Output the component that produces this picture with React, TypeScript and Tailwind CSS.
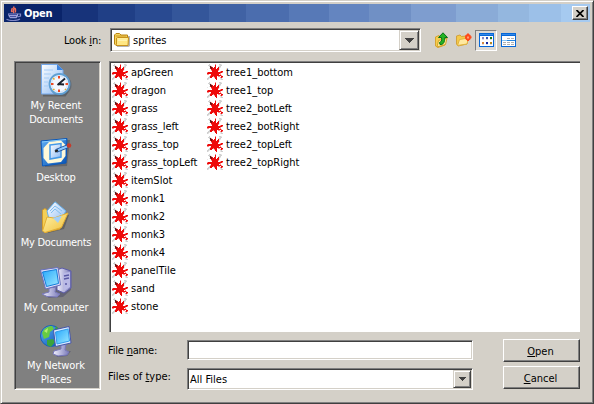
import type { ReactNode } from "react";

const SPLAT = [
  "..g.....p...ggl.",
  ".ggl....r...lgg.",
  "..gkp...r..lgg..",
  "...kkr.rr..rgl..",
  "..lrkrrrr.rrl...",
  "l...rrrrrrrrl...",
  "....prrrrrrp....",
  ".....rrrrrr..prr",
  "prrrrrrrrrrrrrrp",
  "rrrrrrrrrrrrrp..",
  "pp..rrrrrrrr.p..",
  "...prrrrrrrrrrp.",
  "..grrrprrr.pp.rr",
  ".ggrr..prr...prp",
  "ggl.....rr...lg.",
  "gl.......r...lgg",
];

const FILL: Record<string, string> = { r: "#ee0a0a", p: "#f88c8c", k: "#5a1c1c", g: "#d0d0d0", l: "#e8e8e8" };

function Splat() {
  return (
    <svg width="16" height="16" viewBox="0 0 16 16" shapeRendering="crispEdges" className="shrink-0">
      {SPLAT.map((row, y) =>
        row.split("").map((c, x) => (c === "." ? null : <rect key={`${x}-${y}`} x={x} y={y} width="1" height="1" fill={FILL[c]} />)),
      )}
    </svg>
  );
}

function JavaCup() {
  return (
    <svg width="16" height="16" viewBox="0 0 16 16" fill="none">
      <path d="M8 8C5.5 6 9.5 4.5 7.5 1.5M6 7C4.5 5 6.8 4.5 6 3M9.5 7.5C9 6 10.2 5.2 9 3" stroke="#f0705c" strokeWidth="1.5" />
      <path d="M2 8.5H12V11L10.5 13.2H4L2.5 11Z" fill="#9aa0d8" />
      <path d="M3 9.5H11M4 11.5H10" stroke="#4750a0" />
      <path d="M12 9H14.5V11L11.5 12M.5 14.2C4 16 11 16 14 14" stroke="#8088c8" strokeWidth="1.2" />
    </svg>
  );
}

function FolderIcon() {
  return (
    <svg width="16" height="16" viewBox="0 0 16 16">
      <path d="M2 4H16V14L14.5 15H3Z" fill="#777" opacity=".55" />
      <path d="M.5 3L2 1.5H5.5L7 3H13.5V12.5L12.5 13.5H2L.5 12Z" fill="#f8d860" stroke="#b98411" />
      <path d="M1.5 4H12.5M2.5 12.5V6L3.5 5.5H14.5L14 13.5H3Z" fill="#ffe784" stroke="#c8921c" />
      <path d="M4 7H13.5M4 8.5H13" stroke="#fff4b0" />
    </svg>
  );
}

function UpIcon() {
  return (
    <svg width="16" height="16" viewBox="0 0 16 16">
      <path d="M1.5 5L5 3.5L6 5L11 4V13L4 15.5L1.5 14Z" fill="#f5ce4d" stroke="#d6a331" />
      <path d="M3 15L4.5 8.5L13 6L11.5 12.5Z" fill="#ffe894" stroke="#d4a42c" />
      <path d="M6 12.5C9.5 13 10.8 10 10.8 5.5H13.5L9 .8L4.5 5.5H7.5C8 9 7.5 9.5 5.5 10.5Z" fill="#22b422" stroke="#087018" />
    </svg>
  );
}

function NewFolderIcon() {
  return (
    <svg width="16" height="16" viewBox="0 0 16 16">
      <path d="M.5 4L4 3L5.5 4.5L11 4V12L2 14L.5 12Z" fill="#f5ca49" stroke="#d2a13b" />
      <path d="M1.5 13.5L3.5 7.5L12.5 6L11 12Z" fill="#ffe9a0" stroke="#dfb23e" />
      <path d="M12 1.5V9M9 5.2H15.5M9.8 3L14.2 7.5M14.2 3L9.8 7.5" stroke="#ff4818" strokeWidth="2" />
      <rect x="11" y="4.5" width="2" height="2" fill="#ff9d72" />
    </svg>
  );
}

function ViewFrame({ children }: { children: ReactNode }) {
  return (
    <svg width="15" height="14" viewBox="0 0 15 14" shapeRendering="crispEdges">
      <rect width="15" height="14" fill="#0768d8" />
      <rect x="1" y="3" width="13" height="10" fill="#fff" />
      <rect x="1" y="1" width="13" height="1" fill="#3589e8" />
      {children}
    </svg>
  );
}

function ListViewIcon() {
  const dots = ["#8a8ac0", "#3458b8", "#187818", "#d68840", "#1428a0", "#b88820"];
  return (
    <ViewFrame>
      {dots.map((c, i) => (
        <rect key={i} x={3 + (i % 3) * 4} y={i < 3 ? 4 : 9} width="2" height="2" fill={c} />
      ))}
      {dots.map((_, i) => (
        <rect key={i} x={3 + (i % 3) * 4} y={i < 3 ? 6 : 11} width="2" height="1" fill="#dcdce4" />
      ))}
    </ViewFrame>
  );
}

function DetailViewIcon() {
  return (
    <ViewFrame>
      <path d="M6 5.5H13M2 9.5H13M2 11.5H13" stroke="#b0b0b0" strokeDasharray="3 1" />
      <path d="M1 7.5H14" stroke="#8cc8f6" />
      <path d="M6 7.5H14" stroke="#2686de" />
    </ViewFrame>
  );
}

function Big({ children }: { children: ReactNode }) {
  return (
    <svg width="34" height="34" viewBox="0 0 34 34" className="-mb-0.5 shrink-0">
      <defs>
        <linearGradient id="paper" x2="1" y2="1"><stop stopColor="#fff" /><stop offset="1" stopColor="#88b8f4" /></linearGradient>
        <linearGradient id="blue" x2="1" y2="1"><stop stopColor="#5faef4" /><stop offset="1" stopColor="#0752b4" /></linearGradient>
        <linearGradient id="screen" x2="1" y2="1"><stop stopColor="#27a8fc" /><stop offset="1" stopColor="#9be8ff" /></linearGradient>
        <linearGradient id="gold" x2="1" y2="1"><stop stopColor="#fff3ab" /><stop offset="1" stopColor="#f0bf39" /></linearGradient>
        <linearGradient id="metal" x2="1"><stop stopColor="#f2f2ff" /><stop offset="1" stopColor="#7878b8" /></linearGradient>
      </defs>
      {children}
    </svg>
  );
}

function RecentIcon() {
  return (
    <Big>
      <path d="M4 31.5H26L29 27" stroke="#505050" strokeWidth="2" fill="none" opacity=".6" />
      <path d="M2.5.5H18L24 6V30H2.5Z" fill="url(#paper)" stroke="#72a7eb" />
      <path d="M18 .5V6H24" fill="#3b83df" />
      <path d="M5 6H14M5 10H12M5 14H10M5 18H9M5 22H9" stroke="#a5ccf7" />
      <circle cx="21.5" cy="21" r="11" fill="#4e5d70" opacity=".6" />
      <circle cx="20.5" cy="20" r="10" fill="#f3f7ff" stroke="#5fa0d4" strokeWidth="1.8" />
      <circle cx="20.5" cy="20" r="8" fill="none" stroke="#d4e4f7" strokeWidth="1.3" />
      <path d="M20 12V14.5M20 25.5V28M12 20H14.5M26.5 20H29" stroke="#f04820" strokeWidth="2" />
      <path d="M14 14L15.5 15.5M27 26L26 25M14 26L15.5 25" stroke="#e4ad2d" strokeWidth="1.5" />
      <path d="M18.5 21L26 14.5M19 20L25 20.5" stroke="#18202c" strokeWidth="1.8" />
    </Big>
  );
}

function DesktopIcon() {
  return (
    <Big>
      <path d="M4 5L31 4L28 30L6 31Z" fill="#454b55" opacity=".5" />
      <path d="M2 5L28 2.5L27 27L3.5 30Z" fill="url(#blue)" stroke="#0a58ba" />
      <path d="M3 6L27 3.5" stroke="#8bcdfb" />
      <path d="M10 6L22 4.5L26.5 9V20L22 26L9 27.5L4.5 22V12Z" fill="#fff9d9" />
      <path d="M11 9L22 7.5V21L11 23Z" fill="url(#paper)" stroke="#4599e8" strokeWidth="1.5" />
      <path d="M17 15L28 10.5" stroke="#194c9a" strokeWidth="4" />
      <path d="M17 15L28 10.5" stroke="#8ccaff" strokeWidth="2.4" />
      <path d="M16 15.5L19 14.3" stroke="#202020" strokeWidth="2.2" />
      <circle cx="30" cy="9.5" r="2.3" fill="#c43b2c" />
    </Big>
  );
}

function DocumentsIcon() {
  return (
    <Big>
      <path d="M5 14L9 32L25 28L30 14Z" fill="#494949" opacity=".55" />
      <path d="M3.5 9L6 7.5L9 10H22L21 28L6 31.5L3.5 28Z" fill="#f4cf55" stroke="#d19c2c" />
      <path d="M8 10L16 .8L27 10L19 23L11 22Z" fill="url(#paper)" stroke="#65aee8" />
      <path d="M11 10L16 5L23 10M12 12L16 8L22 13" stroke="#82bfef" fill="none" />
      <path d="M3.5 30L8 16L15 17L29 12L22.5 26.5L6 31.5Z" fill="url(#gold)" stroke="#e4ae32" />
      <path d="M14 17L23 14.5L19 22Z" fill="#a1cffb" />
    </Big>
  );
}

function ComputerIcon() {
  return (
    <Big>
      <path d="M19 8L32 7V24L24 31L9 32Z" fill="#464668" opacity=".5" />
      <path d="M18 4L23 2L32 5V22L25 27L18 24Z" fill="url(#metal)" stroke="#5c5ca8" />
      <path d="M24 7L31 6V21L25 25Z" fill="#b9b9e6" />
      <path d="M25 10L30 9M25 13L30 12M26 18H28" stroke="#5959a4" strokeWidth="1.4" />
      <path d="M10 22L17 21L16 26L21 28L18 31L8 30.5L3 28L10 26Z" fill="url(#metal)" stroke="#7777b9" />
      <path d="M1.5 4L19 1.5L21.5 19L6.5 23Z" fill="#dedefa" stroke="#6870bd" />
      <path d="M3.5 6L17.5 3.5L19.5 17.5L7.5 20.5Z" fill="url(#screen)" stroke="#147dda" />
    </Big>
  );
}

function NetworkIcon() {
  return (
    <Big>
      <circle cx="12" cy="12" r="10.5" fill="url(#blue)" stroke="#1760b8" />
      <path d="M3 9C5 4 9 2 13 2L15 5L11 8L10 13L5 15Z" fill="#67cb43" />
      <path d="M17 2L21 7L18 10L15 8ZM8 16L14 15L16 18L12 23L8 21Z" fill="#3ba43c" />
      <path d="M5 7L9 4L8 9Z" fill="#b8ee73" />
      <path d="M17 30L32 27L28 32L18 33Z" fill="#484868" opacity=".6" />
      <path d="M22 20H27L26 26L30 28L28 31L19 32L14 30L15 27L22 25Z" fill="url(#metal)" stroke="#7777b9" />
      <path d="M14.5 6L30 2.5L32 19L16.5 22.5Z" fill="#d8e8ff" stroke="#4656a8" />
      <path d="M16.5 8L29 5L30.5 17L18 20Z" fill="url(#screen)" stroke="#329dea" />
    </Big>
  );
}

function Place({ icon, lines, className }: { icon: ReactNode; lines: { text: string; cls: string }[]; className?: string }) {
  return (
    <div className={`flex flex-col items-center text-white ${className ?? ""}`}>
      {icon}
      <div className="mt-[3px] text-center leading-[14px]">
        {lines.map((l) => (
          <div key={l.text} className={`whitespace-nowrap ${l.cls}`}>{l.text}</div>
        ))}
      </div>
    </div>
  );
}

function Files({ names, className }: { names: string[]; className: string }) {
  return (
    <div className={className}>
      {names.map((n) => (
        <div key={n} className="flex h-[18px] items-center gap-[3px] whitespace-nowrap leading-[14px]">
          <Splat />
          <span className="pt-[2px]">{n}</span>
        </div>
      ))}
    </div>
  );
}

function ArrowButton({ big }: { big?: boolean }) {
  return (
    <div className={`flex h-full shrink-0 items-center justify-center border border-t-[#d4d0c8] border-l-[#d4d0c8] border-r-[#404040] border-b-[#404040] bg-[#d4d0c8] shadow-[inset_1px_1px_0_#fff,inset_-1px_-1px_0_#808080] ${big ? "w-5" : "w-[18px]"}`}>
      <svg width={big ? 9 : 7} height={big ? 5 : 4} viewBox="0 0 9 5" shapeRendering="crispEdges">
        <path d="M0 0H9L4.5 5Z" fill="#404040" />
      </svg>
    </div>
  );
}

const SUNKEN = "border border-t-[#808080] border-l-[#808080] border-r-white border-b-white bg-white shadow-[inset_1px_1px_0_#404040,inset_-1px_-1px_0_#d4d0c8]";
const BUTTON = "flex h-[23px] w-[77px] items-center justify-center border border-t-white border-l-white border-r-[#404040] border-b-[#404040] bg-[#d4d0c8] pt-[2px] pr-[2px] leading-[14px] shadow-[inset_-1px_-1px_0_#808080]";

export default function App() {
  return (
    <div className="flex h-[404px] w-[594px] flex-col overflow-hidden border border-t-[#d4d0c8] border-l-[#d4d0c8] border-r-[#404040] border-b-[#404040] bg-[#d4d0c8] px-[3px] pt-[3px] font-['DejaVu_Sans_Condensed','DejaVu_Sans',sans-serif] text-[11px] text-black shadow-[inset_1px_1px_0_#fff,inset_-1px_-1px_0_#808080] [font-stretch:condensed]">
      <div className="flex h-[18px] shrink-0 items-center bg-[linear-gradient(90deg,#0a246a_0_58px,#17337a_58px_94px,#203f86_94px_131px,#294a91_131px_168px,#34569a_168px_205px,#4062a4_205px_242px,#4b6dae_242px_285px,#5779b7_285px_325px,#6485c0_325px_365px,#7090c5_365px_407px,#7e9dcf_407px_452px,#8aabd7_452px_494px,#94b7df_494px_525px,#9cc0e8_525px_557px,#a6caf0_557px)] pr-[2px] pl-[2px]">
        <JavaCup />
        <span className="ml-[2px] pt-[2px] leading-[14px] font-bold tracking-[-0.2px] text-white">Open</span>
        <div className="ml-auto flex h-[14px] w-4 items-center justify-center border border-t-white border-l-white border-r-[#404040] border-b-[#404040] bg-[#d4d0c8] shadow-[inset_-1px_-1px_0_#808080]">
          <svg width="8" height="7" viewBox="0 0 8 7"><path d="M.5 0L7.5 7M7.5 0L.5 7" stroke="#000" strokeWidth="1.7" /></svg>
        </div>
      </div>

      <div className="mt-[6px] flex h-6 shrink-0 items-center">
        <div className="w-[106px] pt-[2px] pl-[60px] leading-[14px] tracking-[-0.2px] whitespace-nowrap">Look <u>i</u>n:</div>
        <div className={`flex h-6 w-[311px] items-center p-px ${SUNKEN}`}>
          <div className="ml-[2px] flex flex-1 items-center gap-[3px]"><FolderIcon /><span className="pt-[2px] leading-[14px]">sprites</span></div>
          <ArrowButton big />
        </div>
        <div className="ml-[13px] flex items-center">
          <UpIcon />
          <div className="ml-[6px]"><NewFolderIcon /></div>
          <div className="ml-[3px] flex h-[21px] w-[22px] items-center justify-center border border-t-[#808080] border-l-[#808080] border-r-white border-b-white bg-[#dedbd5]"><ListViewIcon /></div>
          <div className="ml-1"><DetailViewIcon /></div>
        </div>
      </div>

      <div className="mt-[9px] flex h-[329px] shrink-0 pl-[10px]">
        <div className="flex h-[329px] w-[87px] shrink-0 flex-col border border-t-[#808080] border-l-[#808080] border-r-white border-b-white bg-[#808080] pt-[2px] pr-[3px] shadow-[inset_1px_1px_0_#404040,inset_-1px_-1px_0_#d4d0c8]">
          <Place icon={<RecentIcon />} lines={[{ text: "My Recent", cls: "tracking-[-0.1px]" }, { text: "Documents", cls: "tracking-[-0.3px]" }]} />
          <Place className="mt-[9px]" icon={<DesktopIcon />} lines={[{ text: "Desktop", cls: "tracking-[-0.2px]" }]} />
          <Place className="mt-[16px]" icon={<DocumentsIcon />} lines={[{ text: "My Documents", cls: "tracking-[-0.3px]" }]} />
          <Place className="mt-[16px]" icon={<ComputerIcon />} lines={[{ text: "My Computer", cls: "tracking-[-0.2px]" }]} />
          <Place className="mt-[9px]" icon={<NetworkIcon />} lines={[{ text: "My Network", cls: "tracking-[-0.1px]" }, { text: "Places", cls: "tracking-[-0.2px]" }]} />
        </div>
        <div className="ml-2 flex w-[471px] flex-col">
          <div className="flex h-[271px] shrink-0 border-t border-l border-[#808080] bg-white pt-px pl-[2px] shadow-[inset_1px_1px_0_#404040]">
            <Files className="w-[95px]" names={["apGreen", "dragon", "grass", "grass_left", "grass_top", "grass_topLeft", "itemSlot", "monk1", "monk2", "monk3", "monk4", "panelTile", "sand", "stone"]} />
            <Files className="" names={["tree1_bottom", "tree1_top", "tree2_botLeft", "tree2_botRight", "tree2_topLeft", "tree2_topRight"]} />
          </div>
          <div className="mt-[7px] flex h-[23px] items-start">
            <div className="-ml-px w-[78px] pt-1 leading-[16px] tracking-[-0.2px] whitespace-nowrap">File <u>n</u>ame:</div>
            <div className={`mt-px ml-px h-5 w-[286px] ${SUNKEN}`} />
            <div className={`ml-[30px] ${BUTTON}`}><span><u>O</u>pen</span></div>
          </div>
          <div className="mt-1 flex h-[24px] items-start">
            <div className="-ml-px w-[78px] pt-[3px] leading-[16px] whitespace-nowrap">Files of <u>t</u>ype:</div>
            <div className={`mt-[2px] ml-px flex h-[22px] w-[286px] items-center p-px ${SUNKEN}`}>
              <span className="ml-px flex-1 pt-[2px] leading-[14px]">All Files</span>
              <ArrowButton />
            </div>
            <div className={`ml-[30px] ${BUTTON}`}><span><u>C</u>ancel</span></div>
          </div>
        </div>
      </div>
    </div>
  );
}
